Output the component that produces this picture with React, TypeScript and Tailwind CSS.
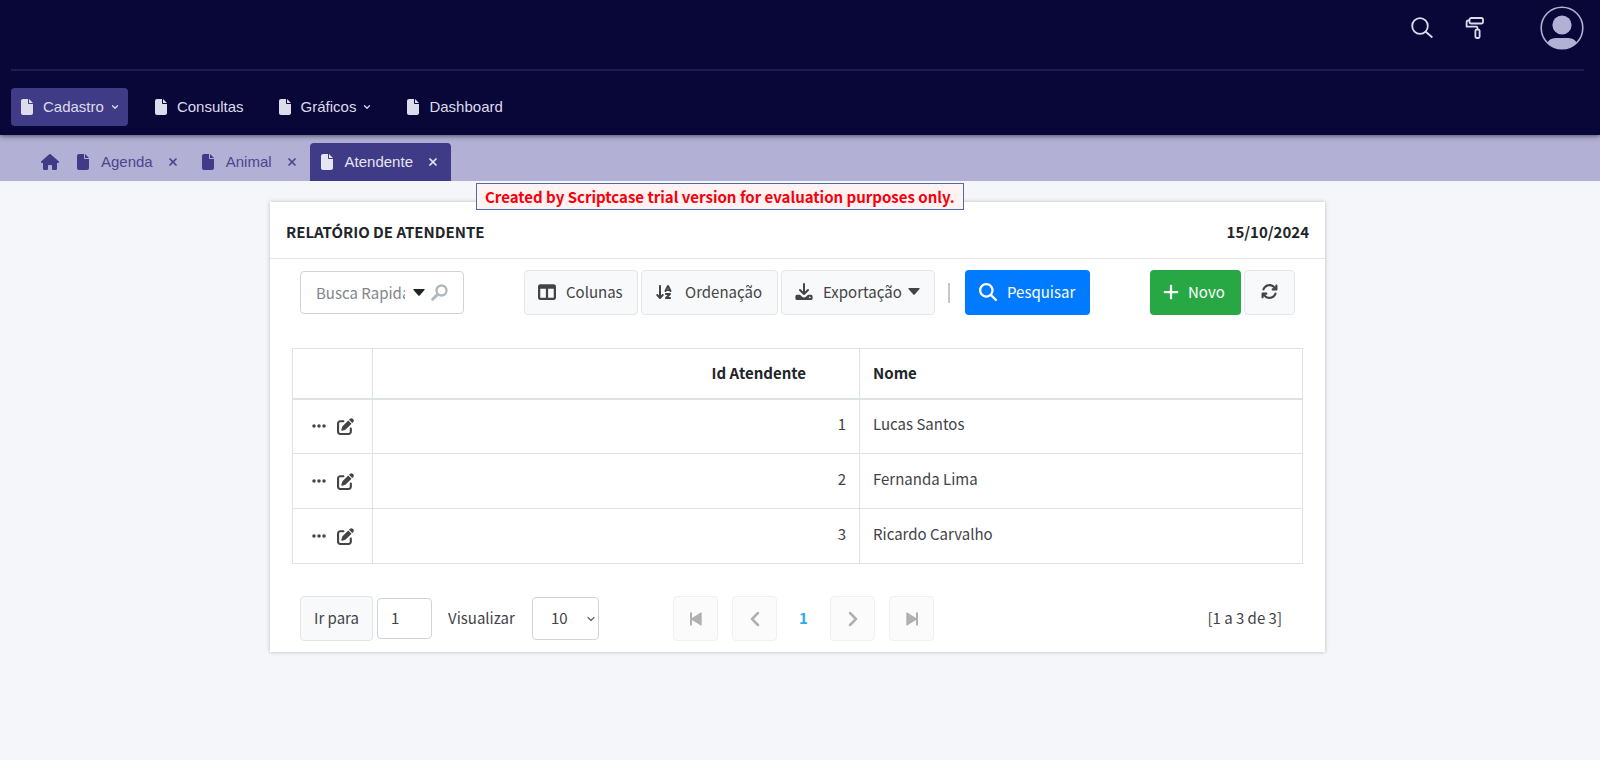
import React from "react";
import { FaFile, FaHouse, FaTableColumns, FaArrowDownAZ, FaMagnifyingGlass, FaPlus, FaArrowsRotate, FaPenToSquare, FaEllipsis } from "react-icons/fa6";
import { ChevronDown, ChevronLeft, ChevronRight, X } from "lucide-react";

const rows = [
  { id: 1, name: "Lucas Santos" },
  { id: 2, name: "Fernanda Lima" },
  { id: 3, name: "Ricardo Carvalho" },
];

const menu = [
  { label: "Cadastro", active: true, sub: true },
  { label: "Consultas", active: false, sub: false },
  { label: "Gráficos", active: false, sub: true },
  { label: "Dashboard", active: false, sub: false },
];

const tabs = [
  { label: "Agenda", active: false },
  { label: "Animal", active: false },
  { label: "Atendente", active: true },
];

function SearchOutline() {
  return (
    <svg width="22" height="22" viewBox="0 0 22 22" fill="none" stroke="currentColor" strokeWidth="1.8" strokeLinecap="round">
      <circle cx="9" cy="9" r="7.8" />
      <path d="M14.8 14.8 20.8 20" />
    </svg>
  );
}

function PaintRoller() {
  return (
    <svg width="20" height="22" viewBox="0 0 20 22" fill="none" stroke="currentColor" strokeWidth="1.8" strokeLinejoin="round">
      <rect x="4.5" y="1" width="13.5" height="5.5" rx="1.8" />
      <path d="M4.5 3.5H3.2A1.6 1.6 0 0 0 1.6 5v4.6h9.600a1.300 1.300 0 0 1 1.300 1.300v1.600" />
      <rect x="10.4" y="12.6" width="4.2" height="8.4" rx="1.2" />
    </svg>
  );
}

function Avatar() {
  return (
    <svg width="44" height="44" viewBox="0 0 44 44">
      <defs>
        <clipPath id="avatar-disc">
          <circle cx="22" cy="22" r="21" />
        </clipPath>
      </defs>
      <g clipPath="url(#avatar-disc)" fill="#b3b0d5">
        <circle cx="22" cy="19" r="9.6" />
        <path d="M6 42c0-6 4-10 10-10h12c6 0 10 4 10 10v3H6z" />
      </g>
      <circle cx="22" cy="22" r="20.8" fill="none" stroke="#b3b0d5" strokeWidth="1.6" />
    </svg>
  );
}

function ExportIcon() {
  return (
    <svg width="18" height="18" viewBox="0 0 18 18" fill="none" stroke="currentColor" strokeWidth="2" strokeLinecap="round" strokeLinejoin="round">
      <path d="M9 1v9.500M5 7 9 11l4-4" />
      <path
        d="M2 11.800h3l1.800 1.600a3.300 3.300 0 0 0 4.400 0l1.800-1.600H16a1.600 1.600 0 0 1 1.600 1.600v2A1.600 1.600 0 0 1 16 17H2A1.600 1.600 0 0 1 .4 15.400v-2A1.600 1.600 0 0 1 2 11.800z"
        fill="currentColor"
        stroke="none"
      />
      <circle cx="14.8" cy="14.4" r="0.8" fill="#f8f9fa" stroke="none" />
    </svg>
  );
}

function Caret() {
  return (
    <svg width="12" height="7" viewBox="0 0 12 7" fill="currentColor">
      <path d="M1 0h10q1 .2.5 1L6.700 6.500q-.7.600-1.400 0L.5 1Q0 .2 1 0z" />
    </svg>
  );
}

function QuickSearchIcon() {
  return (
    <svg width="17" height="17" viewBox="0 0 17 17" fill="none" stroke="currentColor" strokeLinecap="round">
      <circle cx="10.5" cy="6.5" r="5" strokeWidth="2.4" />
      <path d="M6.6 10.4 1.7 15.2" strokeWidth="3" />
    </svg>
  );
}

function EdgeIcon({ flip }: { flip?: boolean }) {
  return (
    <svg width="12" height="14" viewBox="0 0 12 14" fill="currentColor" className={flip ? "rotate-180" : ""}>
      <path d="M0 .6h2v5.400L10.800.6q.9-.4.9.4v12q0 .8-.9.400L2 8v5.400H0z" />
    </svg>
  );
}

const tool = "flex h-[45px] items-center rounded border border-[#e3e5e8] bg-[#f8f9fa] pb-0.5 text-[#444]";
const pager = "flex h-[45px] w-[45px] items-center justify-center rounded border border-[#f0f0f0] bg-[#fbfbfb] text-[#b0b0b0]";

export default function App() {
  return (
    <div className="flex min-h-screen flex-col bg-[#f4f6fa] font-['Noto_Sans_CJK_SC','Source_Sans_Pro',sans-serif] text-[15px] leading-6 text-[#3f4347]">
      <header className="relative z-10 bg-[#090638] pl-[11px] pr-4 font-['Liberation_Sans',Arial,sans-serif] text-[15px] text-[#dddcec] shadow-[0_1px_5px_rgba(0,0,0,0.55)]">
        <div className="flex h-[71px] items-start justify-end border-b-2 border-[#1f1c55] pt-1.5">
          <div className="flex h-11 items-center">
            <button type="button" aria-label="Pesquisar" className="mr-8"><SearchOutline /></button>
            <button type="button" aria-label="Tema" className="mr-[55px]"><PaintRoller /></button>
            <button type="button" aria-label="Usuário"><Avatar /></button>
          </div>
        </div>
        <nav className="flex h-[64px] items-center gap-4 pt-2">
          {menu.map((m) => (
            <a key={m.label} href="#" className={m.active ? "flex h-[38px] items-center rounded bg-[#3f3b86] pl-[9px] pr-2" : "flex h-[38px] items-center pl-2.5 pr-2"}>
              <FaFile className="mr-[9px] h-4 w-3.5" />
              {m.label}
              {m.sub && <ChevronDown className="ml-1.5 h-2.5 w-2.5" strokeWidth={3} />}
            </a>
          ))}
        </nav>
      </header>

      <div className="flex h-[46px] items-end bg-[#b3b0d5] pl-10 font-['Liberation_Sans',Arial,sans-serif] text-[15px] text-[#4a468c]">
        <a href="#" aria-label="Início" className="flex h-[38px] items-center pr-1.5 text-[#3f3b86]"><FaHouse className="h-4 w-5" /></a>
        {tabs.map((t) => (
          <div key={t.label} className={t.active ? "flex h-[38px] items-center rounded-t bg-[#3f3b86] pl-2.5 pr-3 text-[#e6e5f2]" : "flex h-[38px] items-center pl-2.5 pr-3"}>
            <FaFile className={t.active ? "mr-[11px] h-4 w-3.5" : "mr-[11px] h-4 w-3.5 text-[#3f3b86]"} />
            <a href="#">{t.label}</a>
            <button type="button" aria-label={`Fechar ${t.label}`} className="ml-3.5"><X className="h-3 w-3" strokeWidth={3.5} /></button>
          </div>
        ))}
      </div>

      <main className="relative pl-[13px] pr-[18px] pt-[21px]">
        <div className="absolute left-[476px] top-0.5 z-10 border border-[#4a6fa5] bg-[#fff2f2] px-2 text-[15px] font-bold leading-[25px] whitespace-nowrap text-[#f5000c]">
          Created by Scriptcase trial version for evaluation purposes only.
        </div>

        <section className="mx-auto max-w-[1055px] bg-white shadow-[0_0_4px_rgba(0,0,0,0.25)]">
          <div className="flex h-[57px] items-center justify-between border-b border-[#e3e5e8] px-4 pt-1 font-bold text-[#212529]">
            <h1>RELATÓRIO DE ATENDENTE</h1>
            <span>15/10/2024</span>
          </div>

          <div className="flex items-center px-[30px] pt-[11px]">
            <div className="flex h-[43px] w-[164px] items-center rounded border border-[#ced4da] bg-white pl-[15px]">
              <input aria-label="Busca Rapida" placeholder="Busca Rapida" className="w-[89px] min-w-0 bg-transparent outline-none placeholder:text-[#80868b]" />
              <button type="button" aria-label="Campos" className="ml-2 text-[#212529]"><Caret /></button>
              <button type="button" aria-label="Buscar" className="ml-1.5 text-[#b0b8c0]"><QuickSearchIcon /></button>
            </div>
            <div className="ml-[60px] flex items-center gap-[3px]">
              <button type="button" className={`${tool} w-[114px] pl-[13px]`}><FaTableColumns className="mr-2.5 h-[18px] w-[18px]" />Colunas</button>
              <button type="button" className={`${tool} w-[137px] pl-[13px]`}><FaArrowDownAZ className="mr-3 h-[18px] w-[18px]" />Ordenação</button>
              <button type="button" className={`${tool} w-[154px] pl-[13px]`}><span className="mr-2.5"><ExportIcon /></span>Exportação<span className="ml-1.5"><Caret /></span></button>
            </div>
            <span className="ml-[13px] h-5 w-0.5 bg-[#c8c8c8]" />
            <button type="button" className="ml-[15px] flex h-[45px] w-[125px] items-center rounded bg-[#007bff] pb-0.5 pl-3.5 text-white"><FaMagnifyingGlass className="mr-2.5 h-[18px] w-[18px]" />Pesquisar</button>
            <div className="ml-auto flex gap-[3px]">
              <button type="button" className="flex h-[45px] w-[91px] items-center rounded bg-[#28a745] pb-0.5 pl-3 text-white"><FaPlus className="mr-2 h-[18px] w-[18px]" />Novo</button>
              <button type="button" aria-label="Atualizar" className={`${tool} w-[51px] justify-center`}><FaArrowsRotate className="h-[17px] w-[17px]" /></button>
            </div>
          </div>

          <div className="px-[22px] pt-[33px]">
            <table className="w-full table-fixed border-collapse border border-[#dee2e6]">
              <thead>
                <tr className="h-[50px] border-b-2 border-[#dee2e6] font-bold text-[#212529]">
                  <th className="w-20 border-r border-[#dee2e6]" aria-label="Ações" />
                  <th className="w-[487px] border-r border-[#dee2e6] pr-[53px] text-right">Id Atendente</th>
                  <th className="pl-[13px] text-left">Nome</th>
                </tr>
              </thead>
              <tbody>
                {rows.map((r) => (
                  <tr key={r.id} className="h-[55px] border-b border-[#dee2e6]">
                    <td className="border-r border-[#dee2e6]">
                      <div className="flex items-center pl-[18px] text-[#444]">
                        <button type="button" aria-label="Mais opções"><FaEllipsis className="h-4 w-4" /></button>
                        <button type="button" aria-label={`Editar ${r.name}`} className="ml-2.5"><FaPenToSquare className="h-[17px] w-[17px]" /></button>
                      </div>
                    </td>
                    <td className="border-r border-[#dee2e6] pb-1 pr-[13px] text-right">{r.id}</td>
                    <td className="pb-1 pl-[13px]">{r.name}</td>
                  </tr>
                ))}
              </tbody>
            </table>
          </div>

          <div className="flex items-center px-[30px] pb-[11px] pt-[32px]">
            <button type="button" className={`${tool} w-[73px] justify-center`}>Ir para</button>
            <input aria-label="Página" defaultValue="1" className="ml-1 h-[41px] w-[55px] rounded border border-[#ced4da] pb-0.5 pl-[13px] outline-none" />
            <label htmlFor="page-size" className="ml-4 w-[70px] pb-0.5">Visualizar</label>
            <div className="relative ml-3.5">
              <select id="page-size" defaultValue="10" className="block h-[43px] w-[67px] appearance-none rounded border border-[#ced4da] bg-white pb-0.5 pl-[18px] outline-none">
                <option>10</option>
                <option>20</option>
                <option>50</option>
              </select>
              <ChevronDown className="pointer-events-none absolute right-0.5 top-4 h-3 w-3 text-[#666]" strokeWidth={2.5} />
            </div>
            <div className="ml-[74px] flex items-center">
              <button type="button" aria-label="Primeira página" className={pager}><EdgeIcon /></button>
              <button type="button" aria-label="Página anterior" className={`${pager} ml-3.5`}><ChevronLeft className="h-6 w-6" strokeWidth={2.5} /></button>
              <span className="w-[53px] pb-0.5 text-center font-bold text-[#2eaaf0]">1</span>
              <button type="button" aria-label="Próxima página" className={pager}><ChevronRight className="h-6 w-6" strokeWidth={2.5} /></button>
              <button type="button" aria-label="Última página" className={`${pager} ml-3.5`}><EdgeIcon flip /></button>
            </div>
            <span className="ml-auto pb-0.5 pr-[13px]">[1 a 3 de 3]</span>
          </div>
        </section>
      </main>
    </div>
  );
}
